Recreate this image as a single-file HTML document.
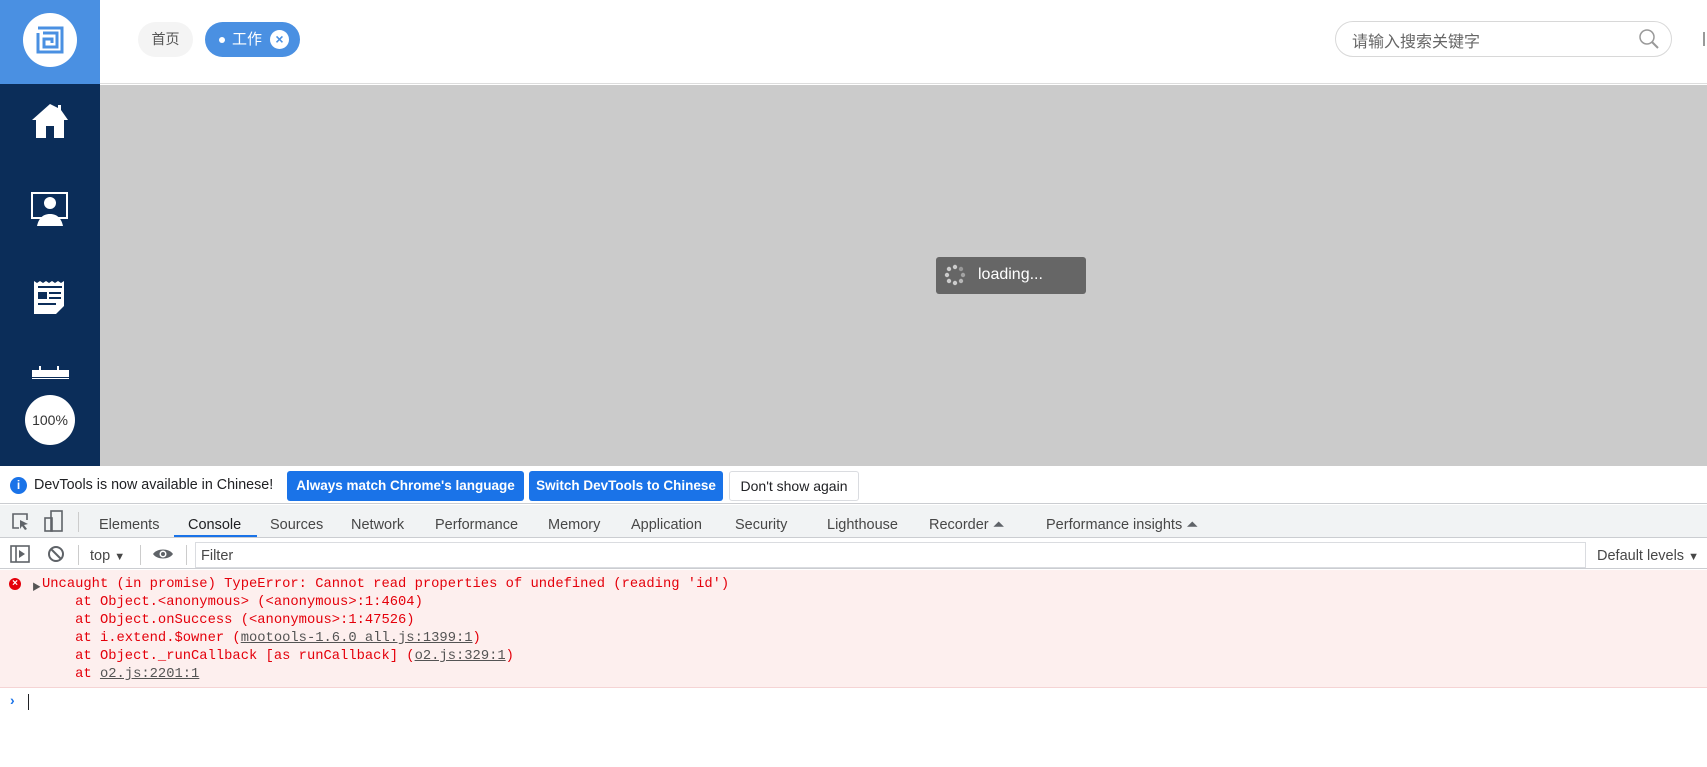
<!DOCTYPE html>
<html><head><meta charset="utf-8"><style>
*{margin:0;padding:0;box-sizing:border-box}
body{width:1707px;height:767px;position:relative;overflow:hidden;background:#fff;font-family:"Liberation Sans","Noto Sans CJK SC",sans-serif}
.a{position:absolute}
.tab{position:absolute;top:517px;font-size:14.5px;color:#474747;white-space:nowrap}
.mono{font-family:"Liberation Mono",monospace;font-size:13.8px;color:#e4000b;position:absolute;white-space:pre}
.mono u{color:#545454;text-decoration:underline}
</style></head><body>
<div class="a" style="left:0;top:0;width:100px;height:84px;background:#4a90e2"></div>
<div class="a" style="left:23px;top:13px;width:54px;height:54px;border-radius:50%;background:#fff"></div>
<svg class="a" style="left:35px;top:25px" width="30" height="30" viewBox="0 0 30 30"><path d="M3 3h24v24H3V8M8 8h14v14H9v-8h8v4" fill="none" stroke="#4a90e2" stroke-width="3"/></svg>
<div class="a" style="left:100px;top:0;width:1607px;height:84px;background:#fff;border-bottom:1px solid #ddd"></div>
<div class="a" style="left:138px;top:22px;width:55px;height:35px;border-radius:18px;background:#f4f4f4;font-size:14px;color:#555;text-align:center;line-height:35px">首页</div>
<div class="a" style="left:205px;top:22px;width:95px;height:35px;border-radius:18px;background:#4a90e2;color:#fff;font-size:15px;line-height:35px">
<span class="a" style="left:14px;top:15px;width:6px;height:6px;border-radius:50%;background:#fff"></span>
<span class="a" style="left:27px;top:0">工作</span>
<span class="a" style="left:65px;top:8px;width:19px;height:19px;border-radius:50%;background:#fff;color:#4a90e2;font-size:14px;line-height:19px;text-align:center;font-weight:bold">×</span></div>
<div class="a" style="left:1335px;top:21px;width:337px;height:36px;border:1px solid #d8d8d8;border-radius:18px"></div>
<div class="a" style="left:1352px;top:28px;font-size:16px;color:#666">请输入搜索关键字</div>
<svg class="a" style="left:1638px;top:28px" width="22" height="22" viewBox="0 0 22 22"><circle cx="9" cy="9" r="7" fill="none" stroke="#999" stroke-width="1.5"/><path d="M14 14l6 6" stroke="#999" stroke-width="2"/></svg>
<div class="a" style="left:1703px;top:32px;width:2px;height:14px;background:#999"></div>
<div class="a" style="left:0;top:84px;width:100px;height:382px;background:#0b2d59"></div>
<svg class="a" style="left:31px;top:102px" width="38" height="38" viewBox="0 0 38 38"><path d="M19 2L1 18h4v18h10V24h8v12h10V18h4L30 8V3h-3v3z" fill="#fff"/></svg>
<svg class="a" style="left:31px;top:191px" width="38" height="36" viewBox="0 0 38 36"><rect x="1" y="2" width="35" height="25" fill="none" stroke="#fff" stroke-width="2"/><circle cx="19" cy="12" r="6" fill="#fff"/><path d="M6 35c2-9 7-12 13-12s11 3 13 12z" fill="#fff"/></svg>
<svg class="a" style="left:33px;top:280px" width="34" height="35" viewBox="0 0 34 35"><path d="M1 1l3 2 3-2 3 2 3-2 3 2 3-2 3 2 3-2 3 2 3-2V26l-8 8H1z" fill="#fff"/><rect x="5" y="6" width="24" height="2" fill="#0b2d59"/><rect x="5" y="12" width="9" height="7" fill="#0b2d59"/><rect x="16" y="12" width="12" height="2" fill="#0b2d59"/><rect x="16" y="17" width="12" height="2" fill="#0b2d59"/><rect x="5" y="23" width="18" height="2" fill="#0b2d59"/></svg>
<svg class="a" style="left:31px;top:364px" width="38" height="15" viewBox="0 0 38 15"><path d="M1 6h37v7H1z" fill="#fff"/><rect x="8" y="2" width="2" height="6" fill="#fff"/><rect x="26" y="2" width="2" height="6" fill="#fff"/><rect x="1" y="14" width="37" height="1" fill="#fff"/></svg>
<div class="a" style="left:25px;top:395px;width:50px;height:50px;border-radius:50%;background:#fff;font-size:14px;color:#333;text-align:center;line-height:50px">100%</div>
<div class="a" style="left:100px;top:85px;width:1607px;height:381px;background:#cbcbcb"></div>
<div class="a" style="left:936px;top:257px;width:150px;height:37px;background:#666;border-radius:3px"></div>
<svg class="a" style="left:944px;top:264px" width="22" height="22" viewBox="0 0 22 22"><g fill="#ccc"><circle cx="11" cy="3" r="2.2"/><circle cx="17" cy="5" r="2.2" opacity=".5"/><circle cx="19" cy="11" r="2.2" opacity=".6"/><circle cx="17" cy="17" r="2.2" opacity=".8"/><circle cx="11" cy="19" r="2.2"/><circle cx="5" cy="17" r="2.2"/><circle cx="3" cy="11" r="2.2"/><circle cx="5" cy="5" r="2.2"/></g></svg>
<div class="a" style="left:978px;top:266px;font-size:16px;color:#fff">loading...</div>
<div class="a" style="left:0;top:466px;width:1707px;height:38px;background:#fff;border-bottom:1px solid #cbcdd1"></div>
<div class="a" style="left:10px;top:477px;width:17px;height:17px;border-radius:50%;background:#1a73e8;color:#fff;font-size:12px;font-weight:bold;text-align:center;line-height:17px">i</div>
<div class="a" style="left:34px;top:477px;font-size:14.3px;color:#202124;white-space:nowrap">DevTools is now available in Chinese!</div>
<div class="a" style="left:287px;top:471px;width:237px;height:30px;background:#1a73e8;border-radius:3px;color:#fff;font-size:13.5px;font-weight:bold;text-align:center;line-height:30px;white-space:nowrap">Always match Chrome's language</div>
<div class="a" style="left:529px;top:471px;width:194px;height:30px;background:#1a73e8;border-radius:3px;color:#fff;font-size:13.5px;font-weight:bold;text-align:center;line-height:30px;white-space:nowrap">Switch DevTools to Chinese</div>
<div class="a" style="left:729px;top:471px;width:130px;height:30px;border:1px solid #dadce0;border-radius:3px;color:#202124;font-size:14px;text-align:center;line-height:28px;white-space:nowrap">Don't show again</div>
<div class="a" style="left:0;top:505px;width:1707px;height:33px;background:#f1f3f4;border-bottom:1px solid #cbcdd1"></div>
<svg class="a" style="left:11px;top:511px" width="20" height="22" viewBox="0 0 20 22"><path d="M8 17H2V3h14v6" fill="none" stroke="#5f6368" stroke-width="1.6"/><path d="M9 9l8 4-4 1 3 4-2 1-3-4-2 3z" fill="#5f6368"/></svg>
<svg class="a" style="left:44px;top:510px" width="20" height="24" viewBox="0 0 20 24"><rect x="7" y="1" width="11" height="20" fill="none" stroke="#5f6368" stroke-width="1.6"/><rect x="1" y="8" width="7" height="13" fill="none" stroke="#5f6368" stroke-width="1.6"/></svg>
<div class="a" style="left:78px;top:512px;width:1px;height:20px;background:#ccc"></div>
<div class="tab" style="left:99px">Elements</div>
<div class="tab" style="left:188px;color:#202124">Console</div>
<div class="a" style="left:174px;top:535px;width:83px;height:2px;background:#1a73e8"></div>
<div class="tab" style="left:270px">Sources</div>
<div class="tab" style="left:351px">Network</div>
<div class="tab" style="left:435px">Performance</div>
<div class="tab" style="left:548px">Memory</div>
<div class="tab" style="left:631px">Application</div>
<div class="tab" style="left:735px">Security</div>
<div class="tab" style="left:827px">Lighthouse</div>
<div class="tab" style="left:929px">Recorder <span style="color:#5f6368">⏶</span></div>
<div class="tab" style="left:1046px">Performance insights <span style="color:#5f6368">⏶</span></div>
<div class="a" style="left:0;top:539px;width:1707px;height:30px;background:#fff;border-bottom:1px solid #cbcdd1"></div>
<svg class="a" style="left:10px;top:545px" width="20" height="18" viewBox="0 0 20 18"><rect x="1" y="1" width="18" height="16" fill="none" stroke="#5f6368" stroke-width="1.6"/><path d="M6 1v16" stroke="#5f6368" stroke-width="1.6"/><path d="M9 5l6 4-6 4z" fill="#5f6368"/></svg>
<svg class="a" style="left:47px;top:545px" width="18" height="18" viewBox="0 0 18 18"><circle cx="9" cy="9" r="7" fill="none" stroke="#5f6368" stroke-width="2"/><path d="M4 4l10 10" stroke="#5f6368" stroke-width="2"/></svg>
<div class="a" style="left:78px;top:545px;width:1px;height:20px;background:#ccc"></div>
<div class="a" style="left:90px;top:548px;font-size:14.5px;color:#474747">top <span style="font-size:11px">▼</span></div>
<div class="a" style="left:140px;top:545px;width:1px;height:20px;background:#ccc"></div>
<svg class="a" style="left:152px;top:547px" width="22" height="14" viewBox="0 0 22 14"><path d="M1 7C5 1 17 1 21 7 17 13 5 13 1 7z" fill="#5f6368"/><circle cx="11" cy="7" r="3.5" fill="#fff"/><circle cx="11" cy="7" r="2" fill="#5f6368"/></svg>
<div class="a" style="left:186px;top:545px;width:1px;height:20px;background:#ccc"></div>
<div class="a" style="left:195px;top:542px;width:1391px;height:26px;border:1px solid #dadce0;background:#fff"></div>
<div class="a" style="left:201px;top:548px;font-size:14.5px;color:#474747">Filter</div>
<div class="a" style="left:1597px;top:548px;font-size:14.5px;color:#474747">Default levels <span style="font-size:11px">▼</span></div>
<div class="a" style="left:0;top:570px;width:1707px;height:118px;background:#fdefee;border-bottom:1px solid #f5d4d4"></div>
<div class="a" style="left:9px;top:578px;width:12px;height:12px;border-radius:50%;background:#e4000b;color:#fff;font-size:10px;line-height:12px;text-align:center;font-weight:bold">×</div>
<div class="a" style="left:32px;top:580px;font-size:9px;color:#555">▶</div>
<div class="mono" style="left:42px;top:577px">Uncaught (in promise) TypeError: Cannot read properties of undefined (reading 'id')</div>
<div class="mono" style="left:42px;top:595px">    at Object.&lt;anonymous&gt; (&lt;anonymous&gt;:1:4604)</div>
<div class="mono" style="left:42px;top:613px">    at Object.onSuccess (&lt;anonymous&gt;:1:47526)</div>
<div class="mono" style="left:42px;top:631px">    at i.extend.$owner (<u>mootools-1.6.0_all.js:1399:1</u>)</div>
<div class="mono" style="left:42px;top:649px">    at Object._runCallback [as runCallback] (<u>o2.js:329:1</u>)</div>
<div class="mono" style="left:42px;top:667px">    at <u>o2.js:2201:1</u></div>
<div class="a" style="left:10px;top:692px;font-size:14px;color:#1a73e8;font-weight:bold">›</div>
<div class="a" style="left:28px;top:694px;width:1px;height:16px;background:#202124"></div>
</body></html>
